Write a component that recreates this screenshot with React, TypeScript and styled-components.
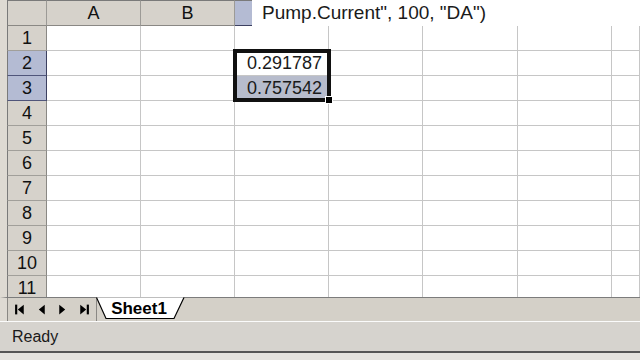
import { Fragment } from 'react'
import styled, { createGlobalStyle } from 'styled-components'

const Global = createGlobalStyle`
  html, body {
    margin: 0;
    padding: 0;
    width: 640px;
    height: 360px;
    overflow: hidden;
    background: #d4d0c8;
    font-family: "Liberation Sans", Arial, sans-serif;
  }
`

const Window = styled.div`
  width: 640px;
  height: 360px;
  display: flex;
  flex-direction: column;
  background: #d4d0c8;
`

const Sheet = styled.div`
  height: 297px;
  overflow: hidden;
  display: grid;
  grid-template-columns: 40px 94px 94px 94px 94px 95px 94px 1fr;
  grid-template-rows: 26px;
  grid-auto-rows: 25px;
  border-left: 7px solid #dedad3;
  background: #fff;
`

const ColHead = styled.div<{ $active?: boolean }>`
  position: relative;
  box-sizing: border-box;
  background: ${p => (p.$active ? '#b4bbd3' : '#d6d2cb')};
  border-top: 1px solid #7a7a7a;
  border-right: 1px solid #9c9a96;
  border-bottom: 1px solid ${p => (p.$active ? '#3c4060' : '#8a8884')};
  display: flex;
  align-items: center;
  justify-content: center;
  font-size: 18px;
  color: #111;
`

const Corner = styled(ColHead)`
  border-left: 1px solid #7a7a7a;
`

const RowHead = styled.div<{ $active?: boolean }>`
  box-sizing: border-box;
  background: ${p => (p.$active ? '#b4bbd3' : '#d6d2cb')};
  border-left: 1px solid #7a7a7a;
  border-right: 1px solid ${p => (p.$active ? '#3c4060' : '#8a8884')};
  border-bottom: 1px solid ${p => (p.$active ? '#50557a' : '#a19f9a')};
  display: flex;
  align-items: center;
  justify-content: center;
  font-size: 18px;
  color: #111;
`

const Cell = styled.div<{ $filled?: boolean }>`
  position: relative;
  box-sizing: border-box;
  background: ${p => (p.$filled ? '#b7bccc' : '#fff')};
  border-right: 1px solid #c6c6c6;
  border-bottom: 1px solid #c6c6c6;
  display: flex;
  align-items: center;
  justify-content: flex-end;
  padding-right: 6px;
  font-size: 18px;
  color: #1a1a1a;
`

/* formula text spilling over the column headers */
const FormulaTip = styled.div`
  position: absolute;
  left: 17px;
  top: -1px;
  width: 388px;
  height: 26px;
  background: #fff;
  z-index: 2;
  display: flex;
  align-items: center;
  padding-left: 10px;
  box-sizing: border-box;
  font-size: 19px;
  color: #1a1a1a;
  white-space: nowrap;
`

const Selection = styled.div`
  position: absolute;
  left: -2px;
  top: -2px;
  width: 98px;
  height: 53px;
  box-sizing: border-box;
  border: 4px solid #111;
  z-index: 3;
  pointer-events: none;
`

const FillHandle = styled.div`
  position: absolute;
  right: -6px;
  bottom: -6px;
  width: 6px;
  height: 6px;
  background: #000;
  border: 1px solid #fff;
`

const TabBar = styled.div`
  height: 24px;
  box-sizing: border-box;
  display: flex;
  border-top: 1px solid #7c7c7c;
  border-left: 7px solid #dedad3;
  background: #d4d0c8;
`

const Nav = styled.div`
  width: 90px;
  display: flex;
  align-items: center;
  justify-content: space-around;
  border-left: 1px solid #8a8884;
  border-right: 1px solid #8a8884;
  padding: 0 2px;
  box-sizing: border-box;
`

const NavBtn = styled.div`
  width: 18px;
  height: 16px;
  display: flex;
  align-items: center;
  justify-content: center;
`

const Tab = styled.div`
  position: relative;
  width: 90px;
  height: 22px;
  margin-left: -1px;
  display: flex;
  align-items: center;
  justify-content: center;
  font-size: 17px;
  font-weight: bold;
  color: #000;

  svg {
    position: absolute;
    left: 0;
    top: -1px;
  }

  span {
    position: relative;
    margin-left: -4px;
  }
`

const StatusBar = styled.div`
  height: 32px;
  box-sizing: border-box;
  border-top: 1px solid #fbfbfb;
  border-bottom: 2px solid #555;
  display: flex;
  align-items: center;
  padding-left: 12px;
  font-size: 16px;
  color: #1a1a1a;
  background: #d6d3ce;
`

const BottomStrip = styled.div`
  flex: 1;
  background: #e4e2de;
`

const cols = ['A', 'B', 'C', 'D', 'E', 'F', 'G']
const rows = [1, 2, 3, 4, 5, 6, 7, 8, 9, 10, 11]
const values: Record<string, string> = { C2: '0.291787', C3: '0.757542' }
// headers to the right of C lie under the formula text
const shownHeads = ['A', 'B']

const Arrow = ({ dir, bar }: { dir: 'l' | 'r'; bar?: boolean }) => (
  <svg width="13" height="13" viewBox="0 0 12 12">
    {dir === 'l' ? (
      <>
        <path d="M9 1.5L3.5 6L9 10.5Z" fill="#000" />
        {bar && <rect x="1" y="1.5" width="2" height="9" fill="#000" />}
      </>
    ) : (
      <>
        <path d="M3 1.5L8.5 6L3 10.5Z" fill="#000" />
        {bar && <rect x="9" y="1.5" width="2" height="9" fill="#000" />}
      </>
    )}
  </svg>
)

export default function App() {
  return (
    <Window>
      <Global />
      <Sheet>
        <Corner />
        {cols.map(c => (
          <ColHead key={c} $active={c === 'C'}>
            {shownHeads.includes(c) && c}
            {c === 'C' && <FormulaTip>Pump.Current", 100, "DA")</FormulaTip>}
          </ColHead>
        ))}
        {rows.map(r => (
          <Fragment key={r}>
            <RowHead $active={r === 2 || r === 3}>{r}</RowHead>
            {cols.map(c => (
              <Cell key={c + r} $filled={c === 'C' && r === 3}>
                {values[c + r]}
                {c === 'C' && r === 2 && (
                  <Selection>
                    <FillHandle />
                  </Selection>
                )}
              </Cell>
            ))}
          </Fragment>
        ))}
      </Sheet>
      <TabBar>
        <Nav>
          <NavBtn><Arrow dir="l" bar /></NavBtn>
          <NavBtn><Arrow dir="l" /></NavBtn>
          <NavBtn><Arrow dir="r" /></NavBtn>
          <NavBtn><Arrow dir="r" bar /></NavBtn>
        </Nav>
        <Tab>
          <svg width="90" height="23" viewBox="0 0 90 23">
            <path d="M0.5 0.5L10 21.5H78L88 0.5" fill="#fff" stroke="#000" strokeWidth="1.2" />
          </svg>
          <span>Sheet1</span>
        </Tab>
      </TabBar>
      <StatusBar>Ready</StatusBar>
      <BottomStrip />
    </Window>
  )
}
